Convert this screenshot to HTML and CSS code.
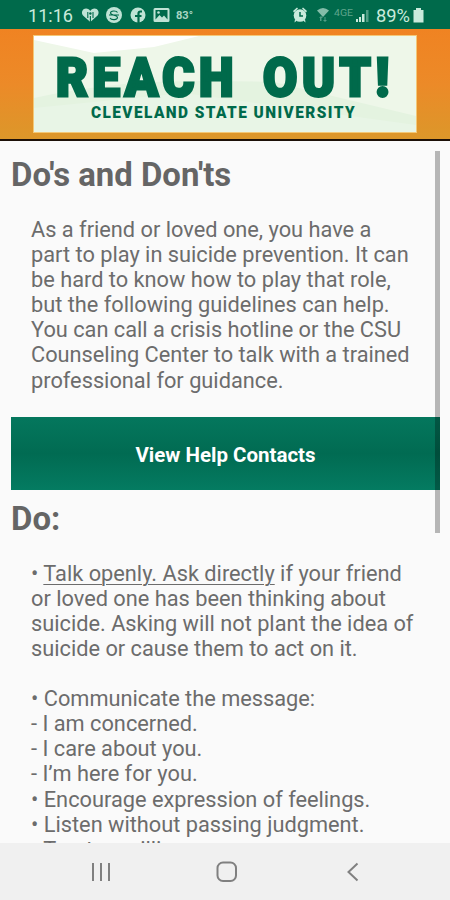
FILE: index.html
```html
<!DOCTYPE html>
<html lang="en">
<head>
<meta charset="utf-8">
<title>Reach Out!</title>
<link rel="stylesheet" href="styles.css">
</head>
<body>
<div class="screen">
  <header class="status">
    <svg width="450" height="29" viewBox="0 0 450 29">
      <text x="28" y="22" class="clock" textLength="45" lengthAdjust="spacingAndGlyphs">11:16</text>
      <g fill="#bfe3d5">
        <path d="M90.300 22 83 15.500C80.500 12 83 8.500 86 8.500c2 0 3.500 1 4.300 2.500.8-1.500 2.300-2.500 4.300-2.500 3 0 5.500 3.500 3 7z"/>
        <circle cx="114" cy="15" r="8"/>
        <circle cx="138" cy="15" r="7.500"/>
        <path fill-rule="evenodd" d="M155 8h13q1.500 0 1.500 1.500v11q0 1.500-1.500 1.500h-13q-1.500 0-1.500-1.500v-11q0-1.500 1.500-1.500zm.5 2v9.500l4-4.500 2.500 2.500 2-2 3.500 4V10z"/>
        <circle cx="158.500" cy="12.500" r="1.300"/>
      </g>
      <g fill="none" stroke="#006a4b" stroke-width="1.100">
        <path d="M87.800 12v6M93 12v6M90.400 16v6"/>
        <path d="M117.500 12.500c-1-2-7-2-7 .5s7 2 7 4.500-6 3-7.500.5M109 15h10"/>
        <path d="M142 11.500h-1.500q-2 0-2 2V23M135 16h6.500" stroke-width="2.200"/>
      </g>
      <circle cx="90.400" cy="13.500" r="1.200" fill="#006a4b"/>
      <text x="176" y="19" class="temp" textLength="17" lengthAdjust="spacingAndGlyphs">83°</text>
      <g fill="#c9eadc">
        <circle cx="300" cy="15.500" r="6.300"/>
        <path d="m293 11 4-3.500 1 1-4 4zM307 11l-4-3.500-1 1 4 4zM295 19l2 1.500-2.500 2zM305 19l-2 1.500 2.500 2z"/>
        <path d="M317 10.500q6-5 12 0L323 17z" opacity=".65"/>
        <path d="m319 18 2-2 2 2h-1.500v3H320v-3zM327 20l-2 2-2-2h1.500v-3h1v3z" opacity=".4"/>
        <path d="M356 19h2v3h-2zM359 17h2v5h-2zM362 14h2.500v8H362z"/>
        <path d="M366 10h2.500v12H366z" opacity=".4"/>
        <path d="M416 8h5v2h2.500v12.500h-10V10h2.500z"/>
      </g>
      <path d="M300 12v4h3" fill="none" stroke="#006a4b" stroke-width="1.500"/>
      <text x="334" y="16" class="network" textLength="19" lengthAdjust="spacingAndGlyphs">4GE</text>
      <text x="376" y="22" class="charge" textLength="34" lengthAdjust="spacingAndGlyphs">89%</text>
    </svg>
  </header>

  <div class="banner">
    <svg class="logo" width="382" height="96" viewBox="0 0 382 96">
      <path fill="#eef7e9" d="M0 0h382v96H0z"/>
      <path fill="#fff" d="M0 0h165L120 11 60 17 0 4z"/>
      <path fill="#e4f3e0" d="M0 62q40-9 90-14t150-2l142 34v16H0z"/>
      <path fill="#e8f5e6" d="M0 72 150 57l232 32v7H0z"/>
      <g class="title">
        <text x="22" y="59.500" textLength="182" lengthAdjust="spacingAndGlyphs">REACH</text>
        <text x="229" y="59.500" textLength="131" lengthAdjust="spacingAndGlyphs">OUT!</text>
      </g>
      <text x="57" y="82" class="subtitle" textLength="265" lengthAdjust="spacingAndGlyphs">CLEVELAND STATE UNIVERSITY</text>
    </svg>
  </div>

  <main class="content">
    <h1 class="heading">Do's and Don'ts</h1>
    <p class="copy">As a friend or loved one, you have a<br>part to play in suicide prevention. It can<br>be hard to know how to play that role,<br>but the following guidelines can help.<br>You can call a crisis hotline or the CSU<br>Counseling Center to talk with a trained<br>professional for guidance.</p>
    <button class="contacts" type="button">View Help Contacts</button>
    <h2 class="heading heading-do">Do:</h2>
    <p class="copy">• <span class="underline">Talk openly. Ask directly</span> if your friend<br>or loved one has been thinking about<br>suicide. Asking will not plant the idea of<br>suicide or cause them to act on it.<br><br>• Communicate the message:<br>- I am concerned.<br>- I care about you.<br>- I’m here for you.<br>• Encourage expression of feelings.<br>• Listen without passing judgment.<br>• Trust or willingness</p>
    <div class="scrollbar"></div>
  </main>

  <nav class="navbar">
    <svg width="450" height="57" viewBox="0 0 450 57" fill="none" stroke="#808080" stroke-width="2">
      <path d="M93 20v18M101 20v18M109 20v18"/>
      <rect x="217.500" y="19.500" width="18.500" height="18.500" rx="5.500"/>
      <path d="m357.500 20.500-9 8.500 9 8.500"/>
    </svg>
  </nav>
</div>
</body>
</html>
```
FILE: styles.css
```css
* { box-sizing: border-box; }
body { margin: 0; font-family: Roboto, "Liberation Sans", sans-serif; }
svg { display: block; }
.screen { width: 450px; height: 900px; display: flex; flex-direction: column; overflow: hidden; background: #fafafa; }
.status { height: 29px; flex: none; background: #006a4b; }
.clock, .charge { font-size: 18.500px; fill: #c9eadc; }
.temp { font-size: 11px; font-weight: 700; fill: #a9d5c3; }
.network { font-size: 9px; fill: #5fa58c; }
.banner { height: 112px; flex: none; padding: 7px 0 0 34px; border-bottom: 2px solid #1c1008; background: linear-gradient(#f08322, #ec8a28 50%, #dc972a); }
.logo { outline: 1px solid #f3c877; }
.title { font-size: 53px; font-weight: 900; letter-spacing: 5px; fill: #006a4b; stroke: #006a4b; stroke-width: 3px; }
.title text, .subtitle { font-family: Roboto, sans-serif; }
.subtitle { font-size: 16px; font-weight: 900; letter-spacing: 1.500px; fill: #006a4b; }
.content { position: relative; flex: 1; min-height: 0; overflow: hidden; padding: 14px 10px 0 11px; color: #6c6c6c; }
.heading { margin: 0; height: 40px; font-size: 32.900px; line-height: 40px; font-weight: 700; color: #656565; white-space: nowrap; }
.copy { margin: 22px 0 0 20px; font-size: 21.780px; line-height: 25.100px; white-space: nowrap; }
.underline { text-decoration: underline; text-decoration-thickness: 1px; text-underline-offset: 3px; }
.contacts { display: block; width: 429px; height: 73px; margin-top: 24px; padding: 3px 0 0; border: 0; font: 700 20.500px Roboto, sans-serif; color: #fff; background: linear-gradient(#04775d, #016b52 50%, #047b61); }
.heading-do { margin-top: 9px; }
.scrollbar { position: absolute; top: 10px; left: 435px; width: 5px; height: 382px; background: rgba(0, 0, 0, .27); }
.navbar { height: 57px; flex: none; background: #f0f0f0; }
```
